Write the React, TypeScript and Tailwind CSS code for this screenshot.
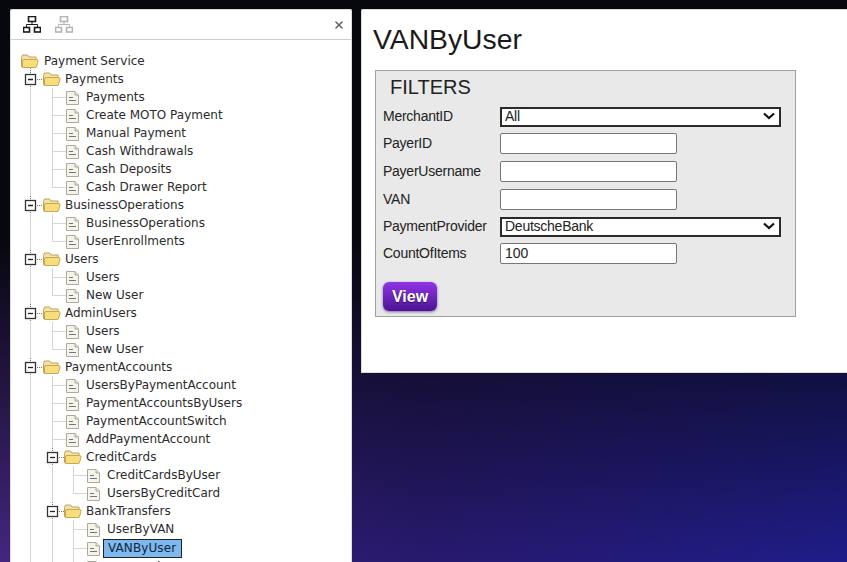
import { X } from 'lucide-react';

type Kind = 'root' | 'folder' | 'leaf';

interface Node {
    label: string;
    level: number;
    kind: Kind;
    selected?: boolean;
}

const nodes: Node[] = [
    { label: 'Payment Service', level: 0, kind: 'root' },
    { label: 'Payments', level: 1, kind: 'folder' },
    { label: 'Payments', level: 2, kind: 'leaf' },
    { label: 'Create MOTO Payment', level: 2, kind: 'leaf' },
    { label: 'Manual Payment', level: 2, kind: 'leaf' },
    { label: 'Cash Withdrawals', level: 2, kind: 'leaf' },
    { label: 'Cash Deposits', level: 2, kind: 'leaf' },
    { label: 'Cash Drawer Report', level: 2, kind: 'leaf' },
    { label: 'BusinessOperations', level: 1, kind: 'folder' },
    { label: 'BusinessOperations', level: 2, kind: 'leaf' },
    { label: 'UserEnrollments', level: 2, kind: 'leaf' },
    { label: 'Users', level: 1, kind: 'folder' },
    { label: 'Users', level: 2, kind: 'leaf' },
    { label: 'New User', level: 2, kind: 'leaf' },
    { label: 'AdminUsers', level: 1, kind: 'folder' },
    { label: 'Users', level: 2, kind: 'leaf' },
    { label: 'New User', level: 2, kind: 'leaf' },
    { label: 'PaymentAccounts', level: 1, kind: 'folder' },
    { label: 'UsersByPaymentAccount', level: 2, kind: 'leaf' },
    { label: 'PaymentAccountsByUsers', level: 2, kind: 'leaf' },
    { label: 'PaymentAccountSwitch', level: 2, kind: 'leaf' },
    { label: 'AddPaymentAccount', level: 2, kind: 'leaf' },
    { label: 'CreditCards', level: 2, kind: 'folder' },
    { label: 'CreditCardsByUser', level: 3, kind: 'leaf' },
    { label: 'UsersByCreditCard', level: 3, kind: 'leaf' },
    { label: 'BankTransfers', level: 2, kind: 'folder' },
    { label: 'UserByVAN', level: 3, kind: 'leaf' },
    { label: 'VANByUser', level: 3, kind: 'leaf', selected: true },
    { label: 'Transactions', level: 3, kind: 'leaf' },
];

const guideX = [10, 32, 53];
const folderX = [1, 23, 44];
const leafX = [0, 0, 46, 67];
const textOffset = [24, 45, 66, 87];

function FolderIcon({ x, y }: { x: number; y: number }) {
    return (
        <g transform={`translate(${x} ${y})`}>
            <path d="M.5 3.5 L1.5 1 H6.5 L8 3 H15 L15.5 12 Q15.5 13.5 14 13.5 H2.5 Q.5 13.5 .5 12 Z" fill="#f3e2a4" stroke="#bfa160" />
            <path d="M1.5 7 Q1.5 5.5 3 5.5 H15.5 Q17.5 5.5 17 7.5 L15.5 12.5 Q15 13.5 14 13.5 H2.5 Q1.5 13.5 1.5 12 Z" fill="#f7de7c" stroke="#c6a757" />
        </g>
    );
}

function LeafIcon({ x, y }: { x: number; y: number }) {
    return (
        <g transform={`translate(${x} ${y})`}>
            <path d="M.5 .5 H9 L12.5 4 V13.5 H.5 Z" fill="#f6f4ea" stroke="#aeaa98" />
            <path d="M9 .5 V4 H12.5" fill="#e4e1d2" stroke="#aeaa98" />
            <path d="M3 6.5 H7 M3 9.5 H10" stroke="#6d7882" />
        </g>
    );
}

function TreeGlyph({ node, next, height }: { node: Node; next?: Node; height: number }) {
    const { level, kind } = node;
    const mid = Math.floor(height / 2);
    const width = textOffset[level];

    return (
        <svg width={width} height={height} className="shrink-0 block">
            {guideX.slice(0, level).map((x, i) => {
                const continues = !next || next.level >= i + 1;
                const own = i === level - 1;
                return (
                    <line
                        key={x}
                        x1={x + 0.5}
                        x2={x + 0.5}
                        y1={0}
                        y2={continues ? height : mid}
                        stroke={own && kind === 'folder' ? '#777' : '#d6d6d6'}
                        strokeDasharray={own && kind === 'folder' ? '1 1' : undefined}
                    />
                );
            })}
            {kind === 'root' && <line x1={10.5} x2={10.5} y1={16} y2={height} stroke="#999" strokeDasharray="1 1" />}
            {kind === 'leaf' && (
                <>
                    <line x1={guideX[level - 1]} x2={leafX[level]} y1={mid + 0.5} y2={mid + 0.5} stroke="#d6d6d6" />
                    <LeafIcon x={leafX[level]} y={mid - 6} />
                </>
            )}
            {kind === 'folder' && (
                <>
                    <line x1={guideX[level - 1] + 5} x2={folderX[level]} y1={mid + 0.5} y2={mid + 0.5} stroke="#777" strokeDasharray="1 1" />
                    <rect x={guideX[level - 1] - 4.5} y={mid - 4.5} width={10} height={10} fill="#fff" stroke="#333" strokeWidth={1.3} />
                    <line x1={guideX[level - 1] - 2} x2={guideX[level - 1] + 3} y1={mid + 0.5} y2={mid + 0.5} stroke="#222" strokeWidth={1.3} />
                </>
            )}
            {kind !== 'leaf' && <FolderIcon x={folderX[level]} y={mid - 7} />}
        </svg>
    );
}

function NetworkIcon({ muted }: { muted?: boolean }) {
    const color = muted ? '#b4b4b4' : '#1c1c1c';
    return (
        <svg width={18} height={17} viewBox="0 0 18 17" fill="none" stroke={color}>
            <rect x={5.5} y={0.5} width={7} height={5} fill={muted ? 'none' : '#fff'} strokeWidth={1.6} />
            <path d="M9 6 V9 M3.5 11 V8.5 H14.5 V11" />
            <rect x={0.5} y={11.5} width={6} height={4.5} strokeWidth={1.6} />
            <rect x={11.5} y={11.5} width={6} height={4.5} strokeWidth={1.6} />
        </svg>
    );
}

function SelectField({ label, value }: { label: string; value: string }) {
    return (
        <div className="flex h-[26px] items-start pt-[3px]">
            <label className="w-[117px] leading-[18px] tracking-[-0.25px]">{label}</label>
            <div className="relative w-[281px]">
                <select
                    defaultValue={value}
                    className="block h-5 w-full appearance-none border-2 border-[#2a2a2a] bg-white pb-[3px] pl-[3px] text-[14px] leading-[14px] tracking-[-0.25px] outline-none"
                >
                    <option>{value}</option>
                </select>
                <svg width={12} height={8} viewBox="0 0 12 8" className="absolute right-[6px] top-[5px]" fill="none" stroke="#111" strokeWidth={2.2}>
                    <path d="M1 1.5 L6 6 L11 1.5" />
                </svg>
            </div>
        </div>
    );
}

function TextField({ label, value = '' }: { label: string; value?: string }) {
    return (
        <div className="flex h-[28px] items-start pt-[3px]">
            <label className="w-[117px] leading-[21px] tracking-[-0.25px]">{label}</label>
            <input
                defaultValue={value}
                className="block h-[21px] w-[177px] rounded-[2px] border border-[#767676] bg-white px-1 text-[14px] outline-none"
            />
        </div>
    );
}

function App() {
    return (
        <div className="flex h-[562px] w-[847px] items-start gap-[9px] overflow-hidden bg-[linear-gradient(180deg,#07070e_0%,#07070e_42%,#0d0b2200_108%),linear-gradient(90deg,#4c2a8e_0%,#2c1c7c_50%,#22209a_100%)] pl-[10px] pt-[9px]">
            <aside className="h-[553px] w-[342px] shrink-0 overflow-hidden rounded-t-[2px] border-x border-t border-[#dddddd] bg-white font-['DejaVu_Sans',sans-serif] text-[12px] text-[#2b2b2b]">
                <div className="flex h-[30px] items-center border-b border-[#cfcfcf] pl-[12px] pr-[6px]">
                    <div className="flex gap-[14px]">
                        <NetworkIcon />
                        <NetworkIcon muted />
                    </div>
                    <X size={12} strokeWidth={3.2} className="ml-auto text-[#666666]" />
                </div>
                <div className="pl-[9px] pt-[12px]">
                    {nodes.map((node, i) => {
                        const height = node.selected ? 20 : 18;
                        return (
                            <div key={i} className="flex items-center whitespace-nowrap" style={{ height }}>
                                <TreeGlyph node={node} next={nodes[i + 1]} height={height} />
                                {node.selected ? (
                                    <span className="-ml-[4px] border border-[#222222] bg-[#7db8ee] pl-[4px] pr-[5px] text-[12px] leading-[17px] tracking-[0.1px] text-[#10243c]">
                                        {node.label}
                                    </span>
                                ) : (
                                    <span>{node.label}</span>
                                )}
                            </div>
                        );
                    })}
                </div>
            </aside>
            <main className="h-[364px] flex-1 rounded-tl-[2px] border-b border-l border-t border-[#dddddd] bg-white pl-[11px] font-['Liberation_Sans',Arial,sans-serif] text-[14px] text-[#222222]">
                <h1 className="pt-[11px] text-[28.3px] leading-[36px] text-[#1a1a1a]">VANByUser</h1>
                <section className="ml-[2px] mt-[13px] h-[247px] w-[421px] border border-[#a0a0a0] bg-[#e9e9e9] pl-[7px]">
                    <div className="pl-[7px] pt-[2px] text-[20px] leading-[28px] text-[#222222]">FILTERS</div>
                    <div className="mt-[3px]">
                        <SelectField label="MerchantID" value="All" />
                        <TextField label="PayerID" />
                        <TextField label="PayerUsername" />
                        <TextField label="VAN" />
                        <SelectField label="PaymentProvider" value="DeutscheBank" />
                        <TextField label="CountOfItems" value="100" />
                    </div>
                    <button
                        type="button"
                        className="mt-[14px] h-[29px] w-[54px] rounded-[6px] bg-[linear-gradient(180deg,#8f35e6_0%,#4d1493_100%)] text-[16px] font-bold text-white shadow-[0_1px_3px_rgba(60,20,120,0.6)] [text-shadow:0_1px_1px_rgba(0,0,0,0.5)]"
                    >
                        View
                    </button>
                </section>
            </main>
        </div>
    );
}

export default App;
